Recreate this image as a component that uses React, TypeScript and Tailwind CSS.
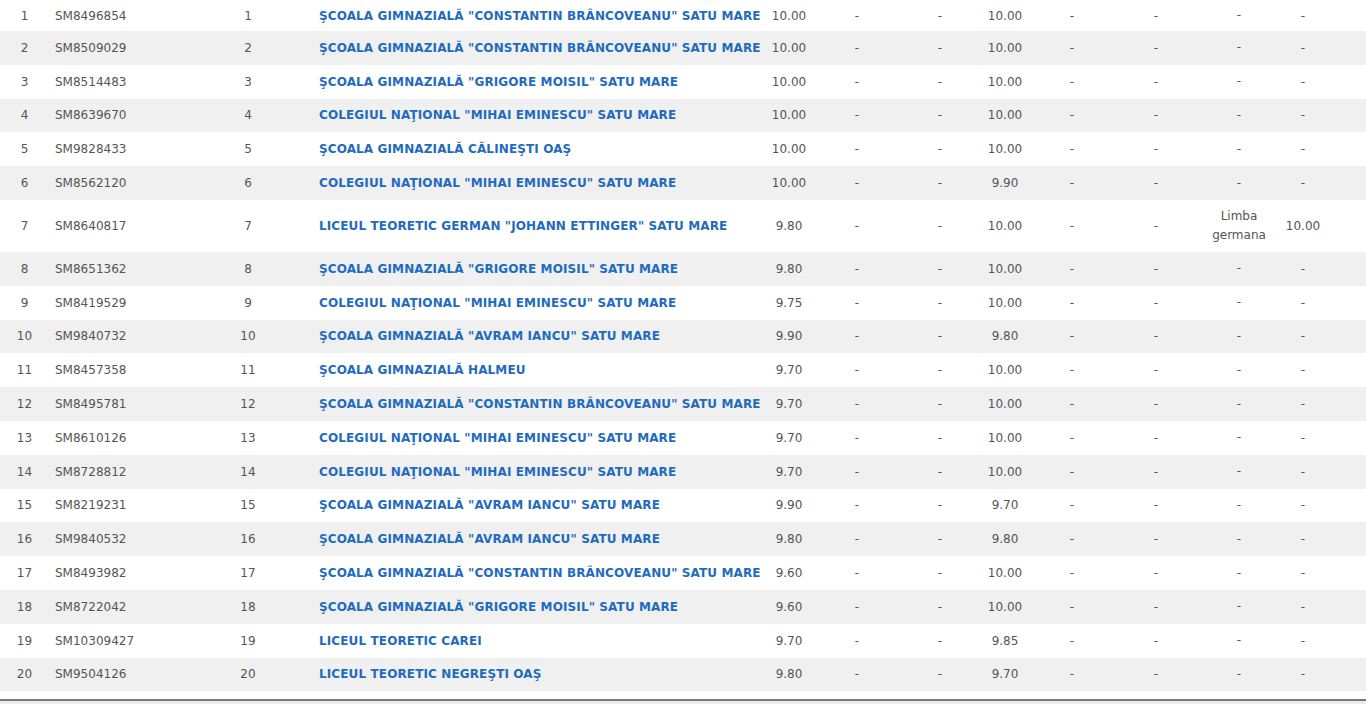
import React from 'react';

type Row = {
  id: string;
  school: string;
  avg: string;
  grade: string;
  lang?: string;
  langGrade?: string;
};

const ROWS: Row[] = [
  { id: 'SM8496854', school: 'ŞCOALA GIMNAZIALĂ "CONSTANTIN BRÂNCOVEANU" SATU MARE', avg: '10.00', grade: '10.00' },
  { id: 'SM8509029', school: 'ŞCOALA GIMNAZIALĂ "CONSTANTIN BRÂNCOVEANU" SATU MARE', avg: '10.00', grade: '10.00' },
  { id: 'SM8514483', school: 'ŞCOALA GIMNAZIALĂ "GRIGORE MOISIL" SATU MARE', avg: '10.00', grade: '10.00' },
  { id: 'SM8639670', school: 'COLEGIUL NAŢIONAL "MIHAI EMINESCU" SATU MARE', avg: '10.00', grade: '10.00' },
  { id: 'SM9828433', school: 'ŞCOALA GIMNAZIALĂ CĂLINEŞTI OAŞ', avg: '10.00', grade: '10.00' },
  { id: 'SM8562120', school: 'COLEGIUL NAŢIONAL "MIHAI EMINESCU" SATU MARE', avg: '10.00', grade: '9.90' },
  { id: 'SM8640817', school: 'LICEUL TEORETIC GERMAN "JOHANN ETTINGER" SATU MARE', avg: '9.80', grade: '10.00', lang: 'Limba germana', langGrade: '10.00' },
  { id: 'SM8651362', school: 'ŞCOALA GIMNAZIALĂ "GRIGORE MOISIL" SATU MARE', avg: '9.80', grade: '10.00' },
  { id: 'SM8419529', school: 'COLEGIUL NAŢIONAL "MIHAI EMINESCU" SATU MARE', avg: '9.75', grade: '10.00' },
  { id: 'SM9840732', school: 'ŞCOALA GIMNAZIALĂ "AVRAM IANCU" SATU MARE', avg: '9.90', grade: '9.80' },
  { id: 'SM8457358', school: 'ŞCOALA GIMNAZIALĂ HALMEU', avg: '9.70', grade: '10.00' },
  { id: 'SM8495781', school: 'ŞCOALA GIMNAZIALĂ "CONSTANTIN BRÂNCOVEANU" SATU MARE', avg: '9.70', grade: '10.00' },
  { id: 'SM8610126', school: 'COLEGIUL NAŢIONAL "MIHAI EMINESCU" SATU MARE', avg: '9.70', grade: '10.00' },
  { id: 'SM8728812', school: 'COLEGIUL NAŢIONAL "MIHAI EMINESCU" SATU MARE', avg: '9.70', grade: '10.00' },
  { id: 'SM8219231', school: 'ŞCOALA GIMNAZIALĂ "AVRAM IANCU" SATU MARE', avg: '9.90', grade: '9.70' },
  { id: 'SM9840532', school: 'ŞCOALA GIMNAZIALĂ "AVRAM IANCU" SATU MARE', avg: '9.80', grade: '9.80' },
  { id: 'SM8493982', school: 'ŞCOALA GIMNAZIALĂ "CONSTANTIN BRÂNCOVEANU" SATU MARE', avg: '9.60', grade: '10.00' },
  { id: 'SM8722042', school: 'ŞCOALA GIMNAZIALĂ "GRIGORE MOISIL" SATU MARE', avg: '9.60', grade: '10.00' },
  { id: 'SM10309427', school: 'LICEUL TEORETIC CAREI', avg: '9.70', grade: '9.85' },
  { id: 'SM9504126', school: 'LICEUL TEORETIC NEGREŞTI OAŞ', avg: '9.80', grade: '9.70' },
];

// latimi coloane (px), total 1366
const COLS = [49, 134, 130, 453, 46, 90, 76, 54, 80, 88, 78, 50, 38];

export default function App() {
  return (
    <div className="w-[1366px] h-[704px] overflow-hidden bg-white text-[12px] text-[#555] font-['DejaVu_Sans',Verdana,sans-serif]">
      <table className="w-[1366px] table-fixed border-collapse">
        <colgroup>
          {COLS.map((w, i) => (
            <col key={i} style={{ width: w }} />
          ))}
        </colgroup>
        <tbody>
          {ROWS.map((r, i) => {
            const n = i + 1;
            const tall = !!r.lang;
            const h = i === 0 ? 'h-[31px]' : tall ? 'h-[52px]' : 'h-[33.8px]';
            return (
              <tr key={r.id} className={`${h} ${n % 2 === 0 ? 'bg-[#f0f0f0]' : 'bg-white'}`}>
                <td className="p-0 text-center align-middle">{n}</td>
                <td className="p-0 pl-[6px] align-middle">{r.id}</td>
                <td className="p-0 text-center align-middle">{n}</td>
                <td className="p-0 pl-[6px] align-middle whitespace-nowrap">
                  <a className="font-bold tracking-[0.12px] text-[#1f6bbd] no-underline cursor-pointer">{r.school}</a>
                </td>
                <td className="p-0 text-center align-middle">{r.avg}</td>
                <td className="p-0 text-center align-middle">-</td>
                <td className="p-0 text-center align-middle">-</td>
                <td className="p-0 text-center align-middle">{r.grade}</td>
                <td className="p-0 text-center align-middle">-</td>
                <td className="p-0 text-center align-middle">-</td>
                <td className="p-0 text-center align-middle leading-[19px]">{r.lang ?? '-'}</td>
                <td className="p-0 text-center align-middle">{r.langGrade ?? '-'}</td>
                <td className="p-0"></td>
              </tr>
            );
          })}
        </tbody>
      </table>
      <div className="mt-[8px] border-t-2 border-[#7a7a7a] h-[12px] bg-[#ececec]"></div>
    </div>
  );
}
